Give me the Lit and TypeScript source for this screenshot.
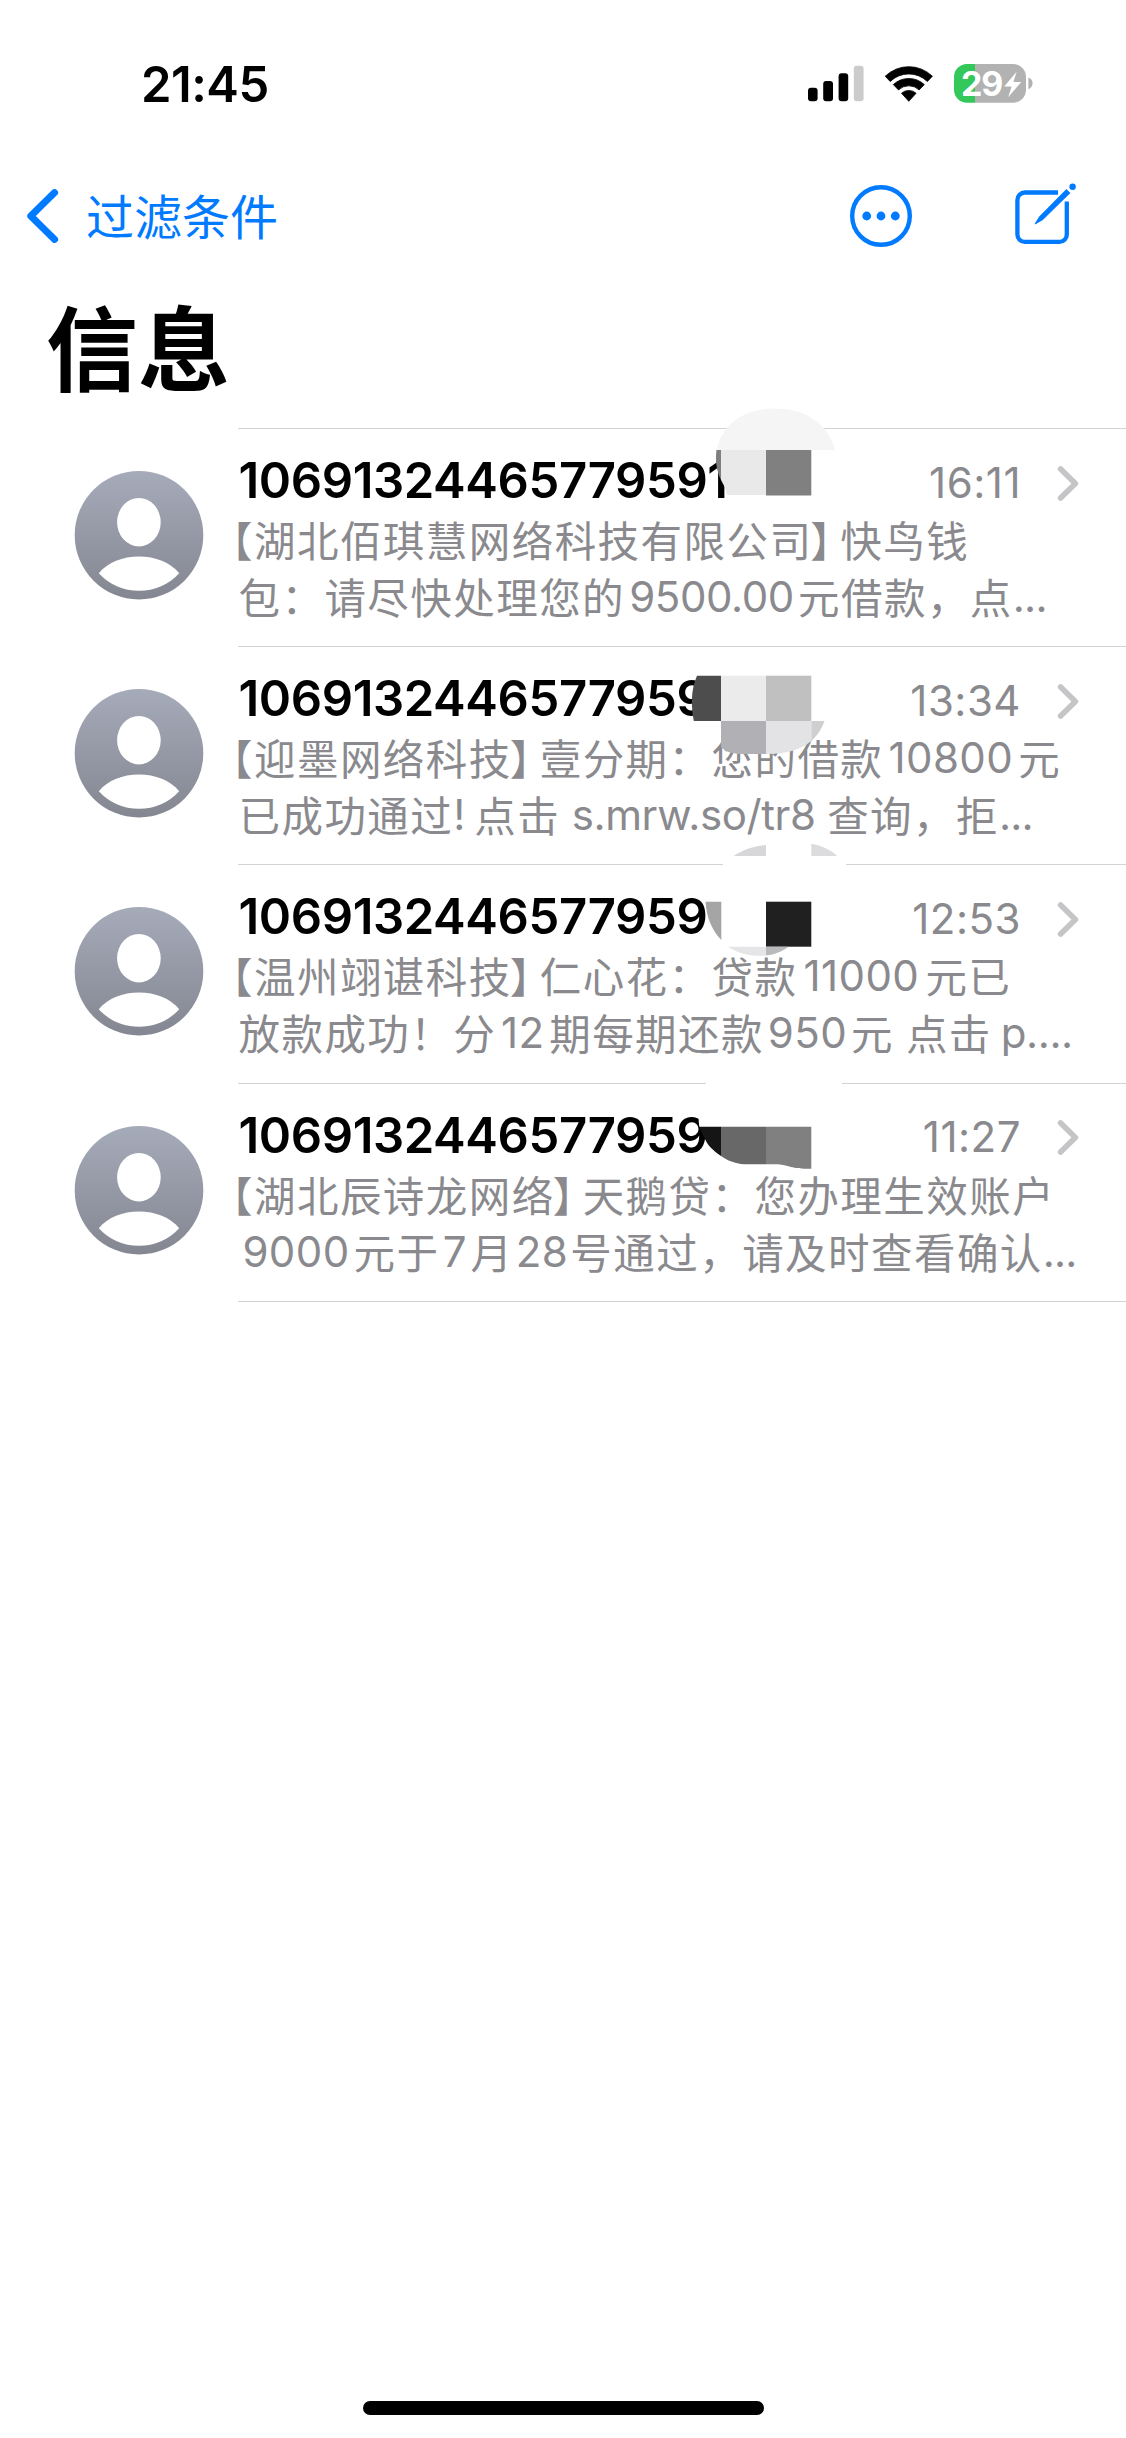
import { LitElement, html, css, svg } from "lit";
import { customElement, property } from "lit/decorators.js";
import { styleMap } from "lit/directives/style-map.js";

type Kind = "cjk" | "open" | "close" | "num" | "latin" | "dots";

interface Segment {
  text: string;
  width: number;
  kind: Kind;
}

interface Message {
  sender: string;
  time: string;
  lines: Segment[][];
}

const CELL = 42.95;

const cjk = (text: string, extra = 0): Segment => ({
  text,
  width: text.length * CELL + extra,
  kind: "cjk",
});
const open: Segment = { text: "【", width: 15.5, kind: "open" };
const close: Segment = { text: "】", width: 28, kind: "close" };
const num = (text: string, width: number): Segment => ({ text, width, kind: "num" });
const latin = (text: string, width: number): Segment => ({ text, width, kind: "latin" });
const dots = (text: string, width: number): Segment => ({ text, width, kind: "dots" });

const MESSAGES: Message[] = [
  {
    sender: "10691324465779591",
    time: "16:11",
    lines: [
      [open, cjk("湖北佰琪慧网络科技有限公司"), close, cjk("快鸟钱")],
      [cjk("包：请尽快处理您的"), latin("9500.00", 173), cjk("元借款，点"), dots("...", 40)],
    ],
  },
  {
    sender: "1069132446577959",
    time: "13:34",
    lines: [
      [open, cjk("迎墨网络科技"), close, cjk("壹分期：您的借款"), num("10800", 135), cjk("元")],
      [
        cjk("已成功通过"),
        latin("!", 8),
        cjk("", 13),
        cjk("点击"),
        latin("s.mrw.so/tr8", 267),
        cjk("查询，拒"),
        dots("...", 40),
      ],
    ],
  },
  {
    sender: "1069132446577959",
    time: "12:53",
    lines: [
      [open, cjk("温州翊谌科技"), close, cjk("仁心花：贷款"), num("11000", 128), cjk("元已")],
      [
        cjk("放款成功！分"),
        num("12", 53),
        cjk("期每期还款"),
        num("950", 87),
        cjk("元", 12),
        cjk("点击"),
        latin("p....", 90),
      ],
    ],
  },
  {
    sender: "1069132446577959",
    time: "11:27",
    lines: [
      [open, cjk("湖北辰诗龙网络"), close, cjk("天鹅贷："), cjk("您办理生效账户")],
      [
        num("9000", 115),
        cjk("元于"),
        num("7", 31),
        cjk("月"),
        num("28", 57),
        cjk("号通过，请及时查看确认"),
        dots("...", 30),
      ],
    ],
  },
];

@customElement("status-bar")
export class StatusBar extends LitElement {
  static styles = css`
    :host {
      display: flex;
      justify-content: space-between;
      align-items: center;
      height: 60px;
      padding: 54px 92px 0 141px;
    }
    .clock {
      font: 600 49px/60px Inter, sans-serif;
      letter-spacing: -0.5px;
      padding-top: 2px;
      color: #000;
    }
    .icons {
      display: block;
      width: 226px;
      height: 42px;
      margin-bottom: 2px;
    }
    .level {
      font: 700 34px Inter, sans-serif;
      letter-spacing: -1.2px;
      fill: #fff;
    }
  `;

  render() {
    return html`
      <span class="clock">21:45</span>
      <svg class="icons" viewBox="808 62 226 42">
        <rect x="808" y="87.7" width="9.6" height="13.6" rx="3" />
        <rect x="823.2" y="81" width="9.8" height="20.3" rx="3" />
        <rect x="838.6" y="73.2" width="9.6" height="28.1" rx="3" />
        <rect x="853.8" y="65.8" width="9.8" height="35.5" rx="3" fill="#cbcbcb" />
        <path
          d="M885.2 76.2a34 34 0 0 1 47.2 0l-5 5.3a26.6 26.6 0 0 0-37.2 0z
             M893.3 84.6a22.6 22.6 0 0 1 31 0l-5.2 5.3a15 15 0 0 0-20.6 0z
             M901.5 93.2a11 11 0 0 1 14.6 0l-7.3 8.1z"
          stroke="#000"
          stroke-width="0.8"
          stroke-linejoin="round"
        />
        <path
          d="M975 64H967a13 13 0 0 0-13 13v12.7a13 13 0 0 0 13 13h8z"
          fill="#34c759"
        />
        <path
          d="M975 64h38a13 13 0 0 1 13 13v12.7a13 13 0 0 1-13 13h-38z"
          fill="#b2b2b2"
        />
        <path d="M1028.4 77.6c5.6 1.8 5.6 9.8 0 11.6z" fill="#b2b2b2" />
        <text class="level" x="961" y="95.6">29</text>
        <path
          d="M1016.6 71.8 1004.2 86.5h7.4l-3.4 10.8 13-15.2h-7.800z"
          fill="#fff"
        />
      </svg>
    `;
  }
}

@customElement("nav-bar")
export class NavBar extends LitElement {
  static styles = css`
    :host {
      display: flex;
      align-items: center;
      height: 72px;
      padding: 66px 46px 0 24px;
      color: #007aff;
    }
    .back {
      width: 38px;
      height: 60px;
    }
    .label {
      flex: 1;
      margin: -4px 0 0 24px;
      font: 400 48px/72px "Noto Sans CJK SC", sans-serif;
    }
    .action {
      width: 70px;
      height: 70px;
    }
    .more {
      margin-right: 94px;
    }
  `;

  render() {
    return html`
      <svg class="back" viewBox="24 186 38 60" fill="none">
        <path
          d="M54.6 192.6 30.8 216l23.8 23.4"
          stroke="currentColor"
          stroke-width="7"
          stroke-linecap="round"
          stroke-linejoin="round"
        />
      </svg>
      <span class="label">过滤条件</span>
      <svg class="action more" viewBox="846 181 70 70" fill="currentColor">
        <circle cx="881" cy="216" r="28.8" fill="none" stroke="currentColor" stroke-width="4.4" />
        <circle cx="866.7" cy="216" r="4.4" />
        <circle cx="881" cy="216" r="4.4" />
        <circle cx="895.3" cy="216" r="4.4" />
      </svg>
      <svg class="action" viewBox="1010 181 70 70" fill="none" stroke="currentColor" stroke-width="4.3">
        <path d="M1058 192.5h-33.2a7.4 7.4 0 0 0-7.4 7.4v34.6a7.4 7.4 0 0 0 7.4 7.4h34.6a7.4 7.4 0 0 0 7.4-7.4V201.500" />
        <path
          d="M1066.4 188.900l4 4-27.6 27.200-7.200 4.200a.6.6 0 0 1-.8-.8l4.400-7z"
          fill="currentColor"
          stroke="none"
        />
        <circle cx="1072.6" cy="186.800" r="3.2" fill="currentColor" stroke="none" />
      </svg>
    `;
  }
}

@customElement("message-row")
export class MessageRow extends LitElement {
  @property({ attribute: false }) message!: Message;

  static styles = css`
    :host {
      display: flex;
      height: 218.2px;
      padding-left: 74px;
      box-sizing: border-box;
    }
    .avatar {
      flex: none;
      width: 130px;
      height: 130px;
      margin: 41px 34px 0 0;
    }
    .body {
      flex: 1;
      box-sizing: border-box;
      border-bottom: 1.5px solid #d3d3d5;
      padding: 22px 0 0 0.5px;
      font-family: Inter, "Noto Sans CJK SC", sans-serif;
      color: #8a8a8e;
    }
    .head {
      display: flex;
      align-items: center;
      height: 60px;
      padding-right: 46px;
    }
    .sender {
      flex: 1;
      font-size: 49px;
      line-height: 60px;
      font-weight: 600;
      letter-spacing: -0.4px;
      color: #000;
    }
    .time {
      font-size: 42px;
      line-height: 60px;
      letter-spacing: 0.5px;
      padding-top: 3px;
    }
    .chevron {
      width: 24px;
      height: 40px;
      margin: 3px 0 0 35px;
    }
    .line {
      display: flex;
      height: 57px;
      white-space: pre;
      font-size: 42px;
      line-height: 57px;
    }
    .seg {
      flex: none;
    }
    .cjk,
    .open,
    .close {
      font-family: "Noto Sans CJK SC", sans-serif;
      font-weight: 400;
      font-size: 41.5px;
      letter-spacing: 1.45px;
    }
    .open,
    .close {
      font-feature-settings: "halt" 1;
    }
    .open {
      display: flex;
      justify-content: flex-end;
    }
    .close {
      text-indent: -2px;
    }
    .num,
    .latin {
      text-align: center;
    }
    .num {
      letter-spacing: 0.4px;
    }
    .latin {
      letter-spacing: -0.4px;
    }
    .dots {
      letter-spacing: -0.8px;
    }
  `;

  render() {
    const { sender, time, lines } = this.message;
    return html`
      <svg class="avatar" viewBox="74 470 130 130">
        <defs>
          <linearGradient id="shade" x1="0" y1="0" x2="0" y2="1">
            <stop offset="0" stop-color="#a6abba" />
            <stop offset="1" stop-color="#848791" />
          </linearGradient>
        </defs>
        <circle cx="139" cy="535.2" r="64.3" fill="url(#shade)" />
        <ellipse cx="138.9" cy="522.2" rx="21.8" ry="24.2" fill="#fff" />
        <path
          d="M98.8 573.2C108 562.4 122.6 556.6 139 556.6s31 5.8 40.2 16.6C169 584.6 154.6 590.8 139 590.8s-30-6.2-40.2-17.6z"
          fill="#fff"
        />
      </svg>
      <div class="body">
        <div class="head">
          <span class="sender">${sender}</span>
          <span class="time">${time}</span>
          <svg class="chevron" viewBox="1056 462 24 40" fill="none">
            <path
              d="M1060.6 468 1075.4 482.4 1060.6 497"
              stroke="#c5c5c7"
              stroke-width="5.6"
              stroke-linecap="round"
              stroke-linejoin="round"
            />
          </svg>
        </div>
        ${lines.map(
          (line) => html`<div class="line">${line.map(
            (s) =>
              html`<span class="seg ${s.kind}" style=${styleMap({ width: `${s.width}px` })}>${s.text}</span>`
          )}</div>`
        )}
      </div>
    `;
  }
}

const REDACTIONS = svg`
  <path d="M716.5 450C722 424 744 408.5 775 408.5C806 408.5 828 424 835 450Z" fill="#f5f5f5" />
  <path d="M716.5 450H721V480C716.5 471 715 460 716.5 450Z" fill="#7f7f7f" />
  <path d="M721 450H766V495.5H727C726.6 489 723 484 721 480Z" fill="#e9e9e9" />
  <path d="M727 495H766V501H727Z" fill="#fff" />
  <rect x="766" y="450" width="45.3" height="45.5" fill="#808080" />

  <path d="M697 675.7H721V721H693.8C691 706 690.6 690 697 675.7Z" fill="#4d4d4d" />
  <rect x="721" y="675.7" width="45" height="45.3" fill="#ebebeb" />
  <rect x="766" y="675.7" width="45.3" height="45.3" fill="#c0c0c0" />
  <path d="M721 721H766V754H742C733 754 726 752 721 747Z" fill="#b0b0b5" />
  <path d="M766 721H811.3V741C799 751 784 754 766 754Z" fill="#e3e3e5" />
  <path d="M811.3 721H824.5C822 728 818 735 811.3 741Z" fill="#cfcfd0" />

  <rect x="723" y="860" width="123" height="9" fill="#fff" />
  <path d="M733.6 856C742 850 753 846 766 845V856Z" fill="#d7d7d9" />
  <path d="M811.3 843.7C821 845.5 831 850 837.3 856H811.3Z" fill="#dcdcde" />
  <path d="M705.6 901.7H721.3V940C712 930 706.5 918 705.6 901.7Z" fill="#a5a5a5" />
  <rect x="766" y="901.7" width="45.3" height="45" fill="#202020" />
  <path d="M728 946.7H766V955.5C752 957 738 953.5 728 946.7Z" fill="#e5e5e7" />
  <path d="M766 946.7H788.5C782 951.5 775 954.5 766 955.5Z" fill="#bababc" />

  <rect x="706" y="1078" width="136" height="9" fill="#fff" />
  <path d="M698 1112H716V1127H699.5C698.5 1122 699 1120 698 1112Z" fill="#fff" />
  <path d="M699.4 1126.7H721V1156C712 1150 707 1144 705.5 1140C703 1135 701 1131 699.4 1126.7Z" fill="#151515" />
  <path d="M721 1126.7H766V1164.3H744C735 1163.5 727 1160.5 721 1156Z" fill="#686868" />
  <path d="M766 1126.7H811.3V1168.8C790 1169.5 788 1164.3 776 1164.3H766Z" fill="#808080" />
`;

@customElement("app-root")
export class AppRoot extends LitElement {
  static styles = css`
    :host {
      display: flex;
      flex-direction: column;
      width: 1126px;
      height: 2438px;
      background: #fff;
      overflow: hidden;
    }
    .title {
      margin: 0;
      padding: 39px 0 0 46px;
      height: 137px;
      font: 700 92px/106px "Noto Sans CJK SC", sans-serif;
      color: #000;
    }
    .list {
      position: relative;
    }
    .rule {
      height: 1px;
      margin-left: 238px;
      background: #d3d3d5;
    }
    .rows {
      display: flex;
      flex-direction: column;
    }
    .cover {
      position: absolute;
      left: 0;
      top: 0;
      width: 1126px;
      height: 880px;
      overflow: visible;
    }
    .home {
      width: 401px;
      height: 14px;
      margin: auto auto 23px 363px;
      border-radius: 7px;
      background: #000;
    }
  `;

  render() {
    return html`
      <status-bar></status-bar>
      <nav-bar></nav-bar>
      <h1 class="title">信息</h1>
      <div class="list">
        <div class="rule"></div>
        <div class="rows">
          ${MESSAGES.map((m) => html`<message-row .message=${m}></message-row>`)}
        </div>
        <svg class="cover" viewBox="0 428 1126 880">${REDACTIONS}</svg>
      </div>
      <div class="home"></div>
    `;
  }
}
